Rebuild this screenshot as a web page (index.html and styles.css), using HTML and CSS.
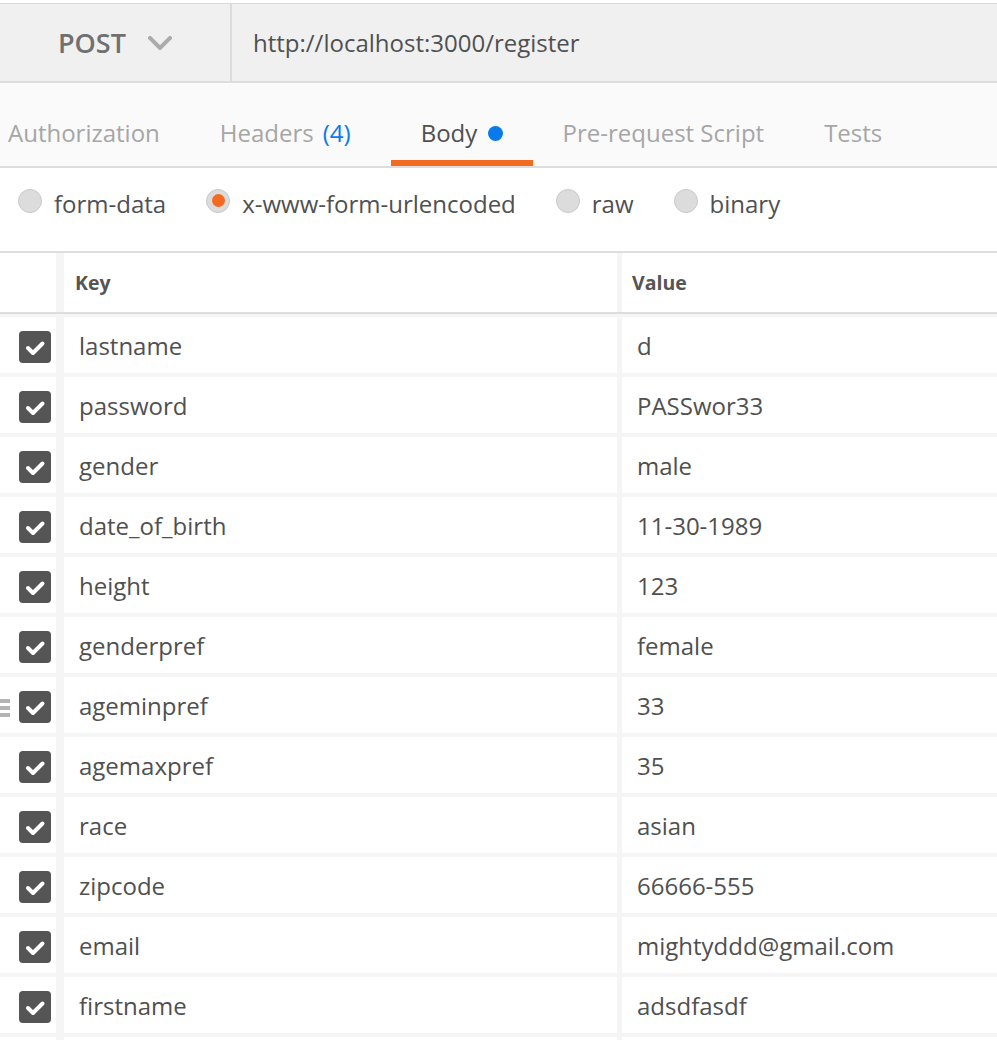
FILE: index.html
```html
<!DOCTYPE html>
<html lang="en">
<head>
<meta charset="utf-8">
<title>Postman request</title>
<link rel="stylesheet" href="styles.css">
</head>
<body>
<div class="page">
  <div class="urlbar">
    <div class="method">
      <span class="method-name">POST</span>
      <svg class="chev" width="24" height="14" viewBox="0 0 24 14"><path d="M2 2 L12 12 L22 2" fill="none" stroke="#ababab" stroke-width="4" stroke-linecap="square"/></svg>
    </div>
    <div class="url">http://localhost:3000/register</div>
  </div>

  <div class="tabs">
    <div class="tab first">Authorization</div>
    <div class="tab headers">Headers<span class="count">(4)</span></div>
    <div class="tab active">Body <span class="dot"></span></div>
    <div class="tab">Pre-request Script</div>
    <div class="tab">Tests</div>
  </div>

  <div class="modes">
    <label class="mode"><span class="radio"></span><span>form-data</span></label>
    <label class="mode"><span class="radio on"></span><span>x-www-form-urlencoded</span></label>
    <label class="mode"><span class="radio"></span><span>raw</span></label>
    <label class="mode"><span class="radio"></span><span>binary</span></label>
  </div>

  <div class="table">
    <div class="thead">
      <div class="c-check"></div>
      <div class="c-key th">Key</div>
      <div class="c-val th">Value</div>
    </div>
    <div class="tbody">
      <div class="row"><div class="c-check"><span class="cb"><svg viewBox="0 0 32 32"><path d="M9 17 L14 22 L23.5 12.5"/></svg></span></div><div class="c-key">lastname</div><div class="c-val">d</div></div>
      <div class="row"><div class="c-check"><span class="cb"><svg viewBox="0 0 32 32"><path d="M9 17 L14 22 L23.5 12.5"/></svg></span></div><div class="c-key">password</div><div class="c-val">PASSwor33</div></div>
      <div class="row"><div class="c-check"><span class="cb"><svg viewBox="0 0 32 32"><path d="M9 17 L14 22 L23.5 12.5"/></svg></span></div><div class="c-key">gender</div><div class="c-val">male</div></div>
      <div class="row"><div class="c-check"><span class="cb"><svg viewBox="0 0 32 32"><path d="M9 17 L14 22 L23.5 12.5"/></svg></span></div><div class="c-key">date_of_birth</div><div class="c-val">11-30-1989</div></div>
      <div class="row"><div class="c-check"><span class="cb"><svg viewBox="0 0 32 32"><path d="M9 17 L14 22 L23.5 12.5"/></svg></span></div><div class="c-key">height</div><div class="c-val">123</div></div>
      <div class="row"><div class="c-check"><span class="cb"><svg viewBox="0 0 32 32"><path d="M9 17 L14 22 L23.5 12.5"/></svg></span></div><div class="c-key">genderpref</div><div class="c-val">female</div></div>
      <div class="row hover"><div class="c-check"><span class="handle"><i></i><i></i><i></i></span><span class="cb"><svg viewBox="0 0 32 32"><path d="M9 17 L14 22 L23.5 12.5"/></svg></span></div><div class="c-key">ageminpref</div><div class="c-val">33</div></div>
      <div class="row"><div class="c-check"><span class="cb"><svg viewBox="0 0 32 32"><path d="M9 17 L14 22 L23.5 12.5"/></svg></span></div><div class="c-key">agemaxpref</div><div class="c-val">35</div></div>
      <div class="row"><div class="c-check"><span class="cb"><svg viewBox="0 0 32 32"><path d="M9 17 L14 22 L23.5 12.5"/></svg></span></div><div class="c-key">race</div><div class="c-val">asian</div></div>
      <div class="row"><div class="c-check"><span class="cb"><svg viewBox="0 0 32 32"><path d="M9 17 L14 22 L23.5 12.5"/></svg></span></div><div class="c-key">zipcode</div><div class="c-val">66666-555</div></div>
      <div class="row"><div class="c-check"><span class="cb"><svg viewBox="0 0 32 32"><path d="M9 17 L14 22 L23.5 12.5"/></svg></span></div><div class="c-key">email</div><div class="c-val">mightyddd@gmail.com</div></div>
      <div class="row"><div class="c-check"><span class="cb"><svg viewBox="0 0 32 32"><path d="M9 17 L14 22 L23.5 12.5"/></svg></span></div><div class="c-key">firstname</div><div class="c-val">adsdfasdf</div></div>
      <div class="row"><div class="c-check"></div><div class="c-key"></div><div class="c-val"></div></div>
    </div>
  </div>
</div>
</body>
</html>
```

FILE: styles.css
```css
html, body {
  margin: 0;
  padding: 0;
  background: #ffffff;
  height: 1040px;
  overflow: hidden;
}

body {
  font-family: "Open Sans", "Liberation Sans", sans-serif;
  color: #505050;
}

.page {
  width: 997px;
  padding-top: 3px;
}

/* URL bar */
.urlbar {
  display: flex;
  height: 77px;
  background: #f0f0f0;
  border-top: 1px solid #dadada;
  border-bottom: 2px solid #dddddd;
}

.method {
  width: 232px;
  box-sizing: border-box;
  padding-left: 58px;
  display: flex;
  align-items: center;
  border-right: 2px solid #dcdcdc;
}

.method-name {
  font-size: 27px;
  font-weight: 600;
  color: #707070;
}

.chev {
  margin-left: 22px;
  margin-top: 1px;
}

.url {
  display: flex;
  align-items: center;
  padding-left: 21px;
  font-size: 24px;
  color: #505050;
}

/* Tabs */
.tabs {
  display: flex;
  height: 83px;
  background: #fafafa;
  border-bottom: 2px solid #dddddd;
}

.tab {
  box-sizing: border-box;
  height: 83px;
  display: flex;
  align-items: center;
  padding: 21px 30px 0;
  border-bottom: 6px solid transparent;
  font-size: 24px;
  color: #a6a6a6;
  white-space: pre;
}

.tab.first {
  padding-left: 8px;
}

.tab.headers {
  margin-right: 10px;
}

.count {
  color: #097bed;
  margin-left: 9px;
}

.tab.active {
  color: #505050;
  border-bottom-color: #f26b21;
}

.dot {
  display: inline-block;
  width: 15px;
  height: 15px;
  border-radius: 50%;
  background: #0a7aeb;
  margin-left: 4px;
  margin-top: 2px;
}

/* Body modes */
.modes {
  display: flex;
  align-items: center;
  height: 83px;
  padding-left: 18px;
  gap: 40px;
  border-bottom: 2px solid #dddddd;
  font-size: 24px;
  color: #505050;
}

.mode {
  display: flex;
  align-items: center;
  gap: 12px;
  margin-top: -12px;
}

.radio {
  box-sizing: border-box;
  width: 24px;
  height: 24px;
  border-radius: 50%;
  background: #dcdcdc;
  border: 1px solid #c9c9c9;
  margin-bottom: 6px;
  display: flex;
  align-items: center;
  justify-content: center;
}

.radio.on::after {
  content: "";
  width: 13px;
  height: 13px;
  border-radius: 50%;
  background: #f26b21;
}

/* Table */
.table {
  background: #f5f5f5;
}

.thead {
  display: flex;
  height: 59px;
  border-bottom: 2px solid #dddddd;
}

.thead .c-check,
.thead .c-key,
.thead .c-val,
.row .c-check,
.row .c-key,
.row .c-val {
  background: #ffffff;
  display: flex;
  align-items: center;
  box-sizing: border-box;
}

.c-check {
  width: 56px;
  position: relative;
}

.c-key {
  width: 553px;
  margin-left: 8px;
  padding-left: 15px;
}

.c-val {
  flex: 1;
  margin-left: 5px;
  padding-left: 15px;
}

.th {
  font-size: 19.5px;
  font-weight: 700;
  color: #555555;
}

.thead .c-key {
  padding-left: 11px;
}

.thead .c-val {
  padding-left: 10px;
}

.tbody {
  display: flex;
  flex-direction: column;
  gap: 4px;
  padding-top: 3px;
}

.row {
  display: flex;
  height: 56px;
  font-size: 24px;
  color: #505050;
}

.row .c-key,
.row .c-val {
  padding-top: 1px;
}

.cb {
  width: 32px;
  height: 32px;
  margin-left: 19px;
  margin-top: 4px;
  border-radius: 4px;
  background: #555555;
  display: block;
}

.cb svg {
  display: block;
  width: 32px;
  height: 32px;
}

.cb path {
  fill: none;
  stroke: #ffffff;
  stroke-width: 4;
  stroke-linecap: round;
  stroke-linejoin: round;
}

.handle {
  position: absolute;
  left: 0;
  top: 22px;
  width: 10px;
  display: flex;
  flex-direction: column;
  gap: 3px;
}

.handle i {
  display: block;
  height: 4px;
  background: #b4b4b4;
}
```
